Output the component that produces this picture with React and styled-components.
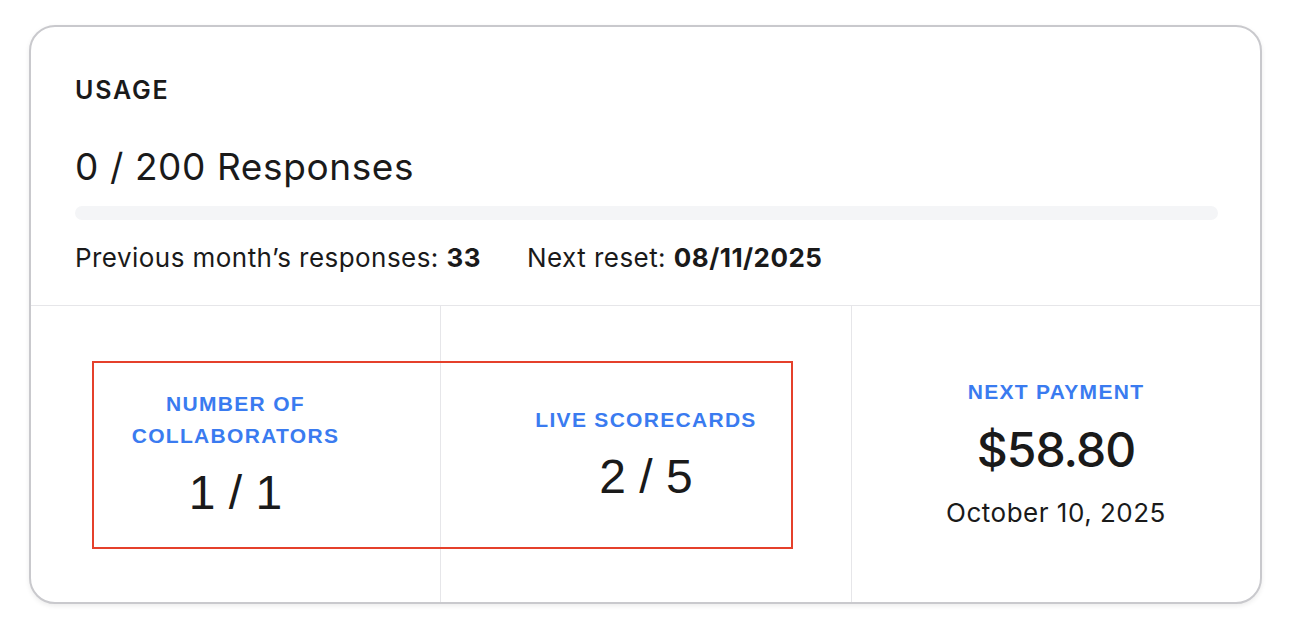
import React from "react";
import styled, { createGlobalStyle } from "styled-components";

const Global = createGlobalStyle`
  html, body { margin: 0; padding: 0; background: #ffffff; }
  body { font-family: Inter, "Noto Sans", sans-serif; color: #1a1a1a; }
`;

const Page = styled.div`
  padding: 25px 30px 28px 29px;
`;

const Card = styled.section`
  border: 2px solid #c9c9cd;
  border-radius: 26px;
  background: #fff;
  box-shadow: 0 2px 5px rgba(0, 0, 0, 0.08);
  overflow: hidden;
`;

const Top = styled.div`
  padding: 48px 42px 31px 44px;
  border-bottom: 1px solid #e6e6e9;
  display: flex;
  flex-direction: column;
`;

const Heading = styled.h2`
  margin: 0;
  font-size: 25px;
  line-height: 30px;
  font-weight: 600;
  letter-spacing: 1.8px;
`;

const Count = styled.div`
  margin-top: 40px;
  font-size: 37px;
  line-height: 44px;
  font-weight: 400;
  letter-spacing: 0.6px;
`;

const Track = styled.div`
  margin-top: 17px;
  height: 14px;
  border-radius: 7px;
  background: #f4f5f7;
  overflow: hidden;
`;

const Fill = styled.div`
  height: 100%;
  background: #3a7bf0;
`;

const Stats = styled.div`
  margin-top: 22px;
  display: flex;
  gap: 46px;
  font-size: 26px;
  line-height: 32px;
  letter-spacing: 0.45px;
`;

const Stat = styled.span`
  b { font-weight: 700; }
`;

const Bottom = styled.div`
  position: relative;
  display: grid;
  grid-template-columns: 409px 411px 1fr;
  height: 296px;
`;

const Cell = styled.div`
  display: flex;
  flex-direction: column;
  align-items: center;
  justify-content: center;
  text-align: center;
  & + & { border-left: 1px solid #e6e6e9; }
`;

const Label = styled.div`
  font-family: "Liberation Sans", Arial, sans-serif;
  font-weight: 700;
  font-size: 21px;
  line-height: ${(p) => (p.$tall ? "32px" : "26px")};
  letter-spacing: 1.3px;
  color: #3a7bf0;
  text-transform: uppercase;
`;

const Value = styled.div`
  margin-top: 13px;
  font-family: "Liberation Sans", Arial, sans-serif;
  font-size: 48px;
  line-height: 56px;
  color: #1a1a1a;
`;

const Amount = styled.div`
  margin-top: 17px;
  font-size: 48px;
  line-height: 56px;
  font-weight: 500;
  letter-spacing: -1px;
`;

const DateText = styled.div`
  margin-top: 19px;
  font-size: 26px;
  line-height: 32px;
  letter-spacing: 0.5px;
`;

const Highlight = styled.div`
  position: absolute;
  left: 61px;
  top: 55px;
  width: 701px;
  height: 188px;
  box-sizing: border-box;
  border: 2px solid #e5402b;
  pointer-events: none;
`;

export default function App() {
  const used = 0;
  const total = 200;
  return (
    <>
      <Global />
      <Page>
        <Card>
          <Top>
            <Heading>USAGE</Heading>
            <Count>
              {used} / {total} Responses
            </Count>
            <Track>
              <Fill style={{ width: `${(used / total) * 100}%` }} />
            </Track>
            <Stats>
              <Stat>
                Previous month’s responses: <b>33</b>
              </Stat>
              <Stat>
                Next reset: <b>08/11/2025</b>
              </Stat>
            </Stats>
          </Top>
          <Bottom>
            <Cell>
              <Label $tall>
                Number of
                <br />
                Collaborators
              </Label>
              <Value>1 / 1</Value>
            </Cell>
            <Cell>
              <Label $tall>Live Scorecards</Label>
              <Value>2 / 5</Value>
            </Cell>
            <Cell>
              <Label>Next Payment</Label>
              <Amount>$58.80</Amount>
              <DateText>October 10, 2025</DateText>
            </Cell>
            <Highlight />
          </Bottom>
        </Card>
      </Page>
    </>
  );
}
